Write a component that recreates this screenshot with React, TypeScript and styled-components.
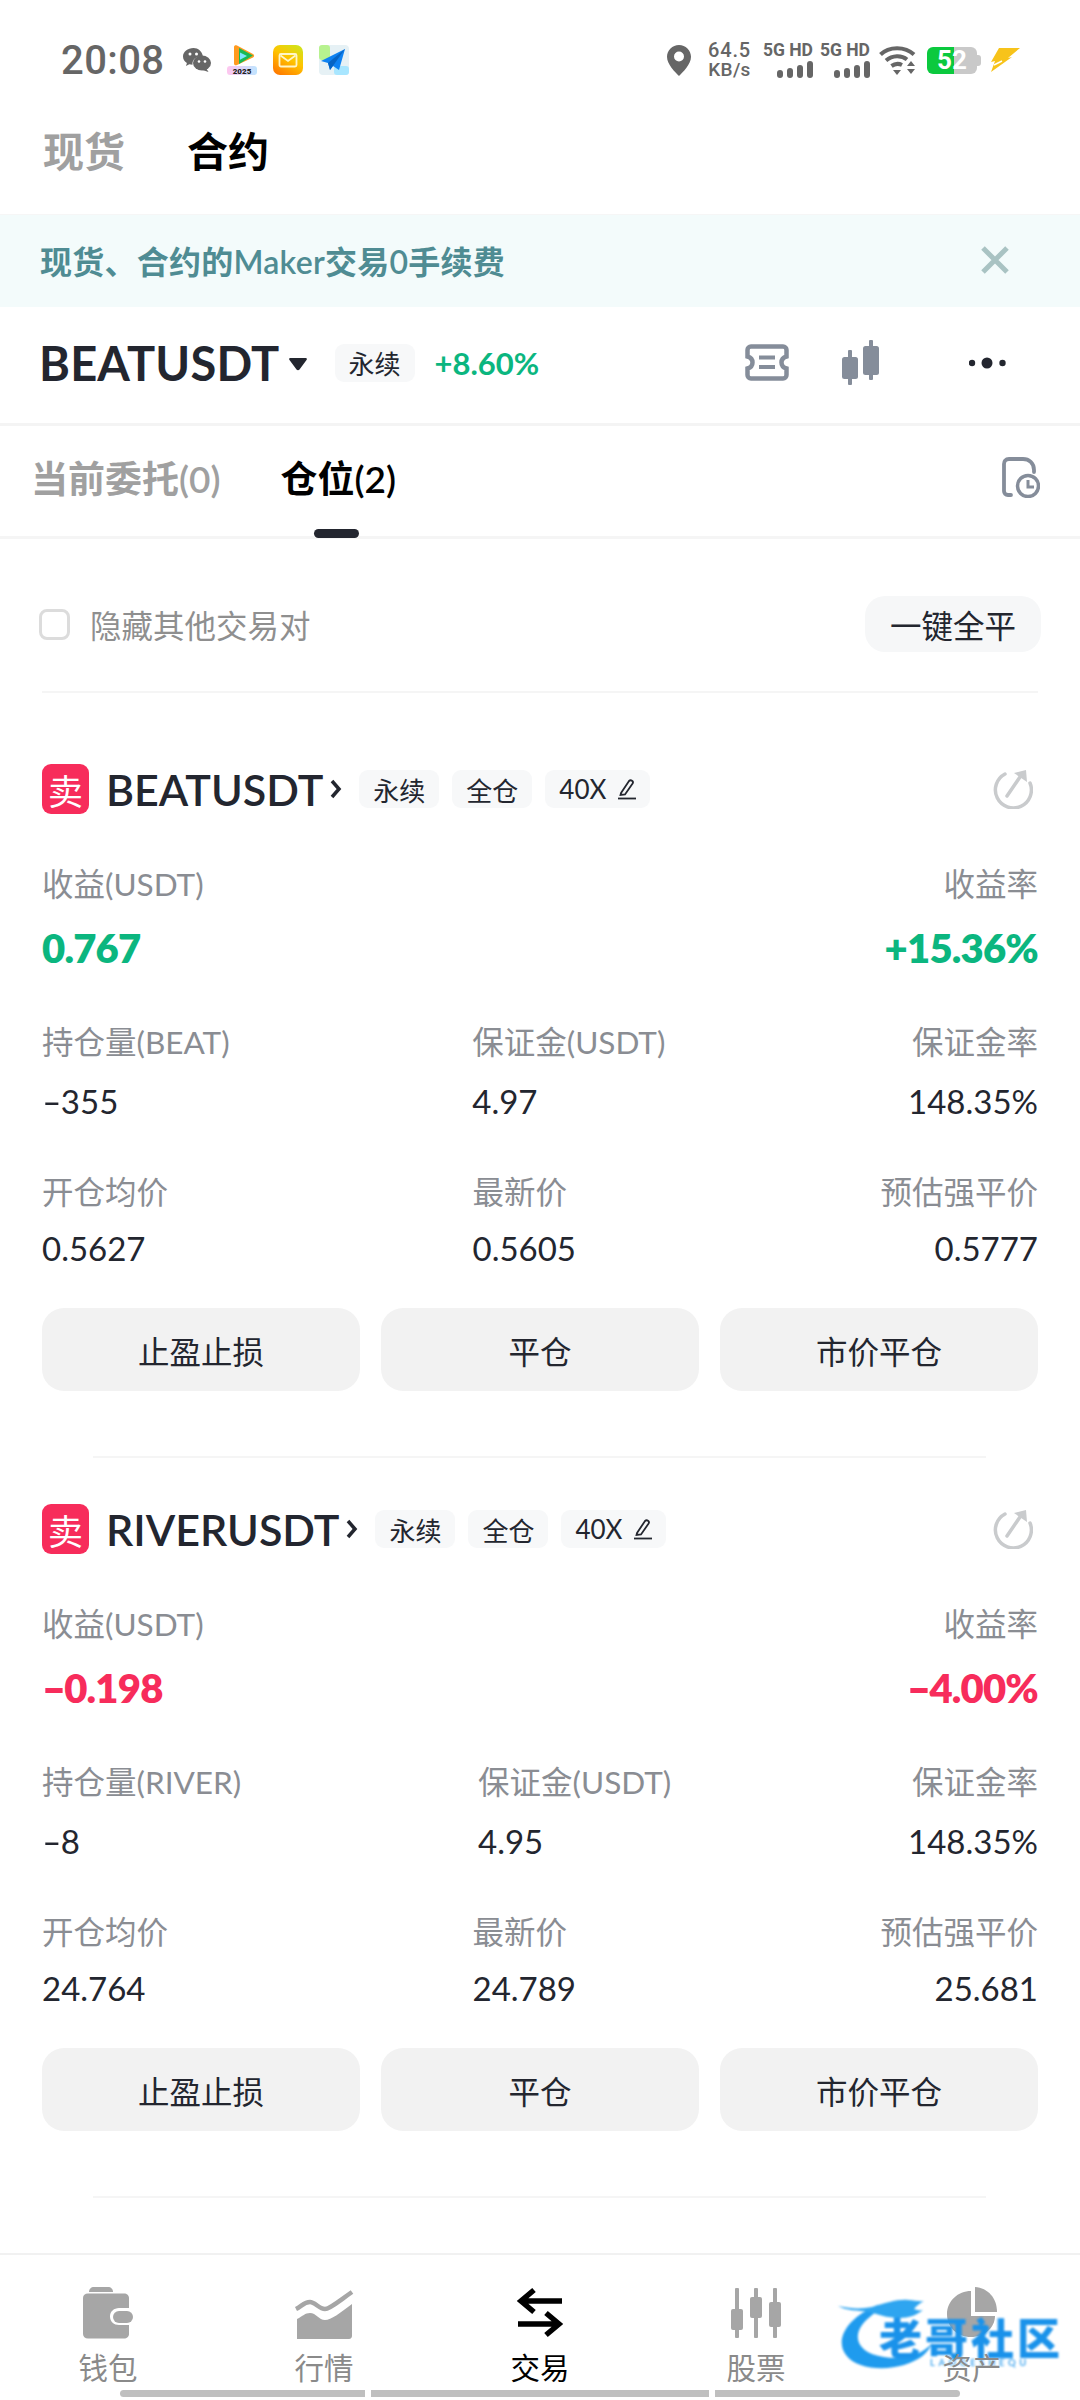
import React from "react";
import styled, { createGlobalStyle } from "styled-components";

const LATIN = `Lato, "Noto Sans CJK SC", sans-serif`;
const DARK = "#23262f";
const GREEN = "#0bb67f";
const RED = "#f72c5b";
const LABEL = "#8a8d93";
const NAV_GREY = "#a6a6a6";

const Global = createGlobalStyle`
  html, body { margin: 0; padding: 0; background: #fff; }
  * { box-sizing: border-box; }
  body { font-family: ${LATIN}; color: ${DARK}; }
`;

const Page = styled.div`
  position: relative;
  width: 1080px;
  height: 2400px;
  display: flex;
  flex-direction: column;
  overflow: hidden;
  background: #fff;
`;

/* ---- status bar ---- */
const StatusBar = styled.div`
  height: 100px;
  padding: 20px 60px 0 61px;
  display: flex;
  align-items: center;
  color: #666;
`;
const Time = styled.span`
  font: 500 40px Roboto, sans-serif;
  letter-spacing: 0.4px;
  margin-right: 19px;
`;
const NotifyIcons = styled.div`
  display: flex;
  align-items: center;
  gap: 16px;
`;
const StatusRight = styled.div`
  margin-left: auto;
  display: flex;
  align-items: center;
`;
const Speed = styled.div`
  margin: 0 12px 0 15px;
  width: 47px;
  display: flex;
  flex-direction: column;
  align-items: center;
  font: 500 20px/19px Roboto, sans-serif;
  letter-spacing: 0.8px;
  white-space: nowrap;
`;
const SpeedUnit = styled.span`
  font-size: 19px;
  letter-spacing: 0.3px;
`;
const Net = styled.div`
  width: 48px;
  margin-right: 9px;
  display: flex;
  flex-direction: column;
  align-items: flex-end;
  gap: 3px;
  font: 700 17.5px/15px Roboto, sans-serif;
  white-space: nowrap;
`;
const Battery = styled.div`
  position: relative;
  width: 50px;
  height: 27px;
  margin: 0 13px 0 11px;
  border-radius: 6px;
  background: linear-gradient(90deg, #0bc93e 54%, #c9c9c9 54%);
  color: #fff;
  font: 700 26px/27px Roboto, sans-serif;
  text-align: center;
  &::after {
    content: "";
    position: absolute;
    right: -4px;
    top: 8px;
    width: 4px;
    height: 11px;
    border-radius: 0 3px 3px 0;
    background: #c9c9c9;
  }
`;

/* ---- top tabs ---- */
const MarketTabs = styled.div`
  height: 114px;
  padding: 0 43px 17px;
  display: flex;
  align-items: center;
  gap: 62px;
`;
const MarketTab = styled.span<{ $on?: boolean }>`
  font-size: 41px;
  font-weight: 600;
  color: ${(p) => (p.$on ? "#000" : "#a0a0a0")};
`;

/* ---- banner ---- */
const Banner = styled.div`
  height: 93px;
  padding: 0 71px 2px 40px;
  display: flex;
  align-items: center;
  justify-content: space-between;
  background: #f3fbfb;
  border-top: 1px solid #f6f6f6;
  color: #4f8c93;
  font-size: 32px;
  letter-spacing: 0.25px;
  font-weight: 600;
`;

/* ---- symbol row ---- */
const SymbolRow = styled.div`
  height: 119px;
  padding: 0 74px 5px 39px;
  display: flex;
  align-items: center;
  border-bottom: 3px solid #f4f4f4;
`;
const SymbolName = styled.span`
  font-size: 47px;
  font-weight: 700;
  color: ${DARK};
  letter-spacing: 0.2px;
`;
const Caret = styled.svg`
  margin: 4px 0 0 9px;
`;
const TagBase = styled.span`
  height: 38px;
  display: inline-flex;
  align-items: center;
  gap: 12px;
  padding: 0 14px;
  border-radius: 9px;
  background: #f7f8f9;
  font-size: 26px;
  color: ${DARK};
  white-space: nowrap;
`;
const SymbolTag = styled(TagBase)`
  margin-left: 28px;
`;
const Change = styled.span`
  margin-left: 20px;
  font-size: 31px;
  font-weight: 700;
  color: ${GREEN};
`;
const SymbolIcon = styled.svg<{ $gap: number }>`
  margin-left: ${(p) => p.$gap}px;
`;
const SymbolIcons = styled.div`
  margin-left: auto;
  display: flex;
  align-items: center;
`;

/* ---- position tabs ---- */
const PosTabs = styled.div`
  position: relative;
  height: 113px;
  padding: 0 40px 8px 31px;
  display: flex;
  align-items: center;
  border-bottom: 3px solid #f5f5f5;
`;
const PosTab = styled.span<{ $on?: boolean }>`
  position: relative;
  margin-right: 60px;
  font-size: 37px;
  font-weight: 600;
  color: ${(p) => (p.$on ? "#000" : "#a0a0a0")};
`;
const Indicator = styled.span`
  position: absolute;
  left: 33px;
  bottom: -34px;
  width: 45px;
  height: 9px;
  border-radius: 5px;
  background: ${DARK};
`;
const DocIcon = styled.svg`
  margin-left: auto;
`;

/* ---- hide row ---- */
const HideRow = styled.div`
  margin: 0 42px 25px;
  height: 154px;
  padding-top: 18px;
  display: flex;
  align-items: center;
  justify-content: space-between;
  border-bottom: 2px solid #f5f5f5;
`;
const HideLabel = styled.label`
  display: flex;
  align-items: center;
  gap: 20px;
  font-size: 31.5px;
  color: #8f8f8f;
`;
const Check = styled.span`
  width: 31px;
  height: 31px;
  border: 3px solid #dcdcdc;
  border-radius: 8px;
  margin-left: -3px;
`;
const CloseAll = styled.span`
  width: 176px;
  height: 56px;
  display: flex;
  align-items: center;
  justify-content: center;
  border-radius: 20px;
  background: #f6f7f8;
  font-size: 31.5px;
  margin-right: -3px;
  color: ${DARK};
`;

/* ---- position card ---- */
const Card = styled.section`
  padding: 46px 42px 67px;
  position: relative;
  &::after {
    content: "";
    position: absolute;
    left: 93px;
    right: 94px;
    bottom: 0;
    height: 2px;
    background: #f5f5f5;
  }
`;
const TitleRow = styled.div`
  height: 50px;
  display: flex;
  align-items: center;
`;
const Badge = styled.span`
  width: 47px;
  height: 50px;
  border-radius: 9px;
  background: ${RED};
  color: #fff;
  font-size: 35px;
  display: flex;
  align-items: center;
  justify-content: center;
`;
const Name = styled.span`
  margin-left: 17px;
  font-size: 43px;
  font-weight: 600;
  color: ${DARK};
`;
const Chevron = styled.svg`
  margin: 0 7px;
`;
const TitleTags = styled.div`
  display: flex;
  gap: 13px;
  margin-left: 10px;
`;
const ShareIcon = styled.svg`
  margin-left: auto;
  margin-right: 5px;
`;
const Row = styled.div<{ $top: number }>`
  margin-top: ${(p) => p.$top}px;
  display: flex;
  justify-content: space-between;
`;
const Col = styled.div<{ $end?: boolean }>`
  display: flex;
  flex-direction: column;
  align-items: ${(p) => (p.$end ? "flex-end" : "flex-start")};
`;
const Label = styled.span`
  font-size: 31.5px;
  line-height: 40px;
  color: ${LABEL};
  white-space: nowrap;
`;
const Value = styled.span<{ $gap: number }>`
  margin-top: ${(p) => p.$gap}px;
  font-size: 33px;
  line-height: 40px;
  color: ${DARK};
`;
const BigValue = styled.span<{ $color: string }>`
  margin-top: 19px;
  font-size: 40px;
  letter-spacing: -0.8px;
  line-height: 50px;
  font-weight: 800;
  color: ${(p) => p.$color};
`;
const Sign = styled.span`
  display: inline-block;
  transform: scaleX(1.6);
  transform-origin: left center;
  margin-right: 0.2em;
`;
const Actions = styled.div`
  margin-top: 40px;
  display: grid;
  grid-template-columns: repeat(3, 318px);
  justify-content: space-between;
`;
const ActionBtn = styled.span`
  height: 83px;
  border-radius: 22px;
  background: #f2f2f2;
  display: flex;
  align-items: center;
  justify-content: center;
  font-size: 31.5px;
  color: ${DARK};
`;

/* ---- bottom nav ---- */
const Spacer = styled.div`
  flex: 1;
`;
const Nav = styled.nav`
  height: 131px;
  padding-top: 32px;
  border-top: 2px solid #f1f1f1;
  display: grid;
  grid-template-columns: repeat(5, 216px);
`;
const NavItem = styled.div<{ $on?: boolean }>`
  display: flex;
  flex-direction: column;
  align-items: center;
  color: ${(p) => (p.$on ? "#000" : "#8a8a8a")};
`;
const NavIcon = styled.svg`
  display: block;
  width: 60px;
  height: 52px;
`;
const NavLabel = styled.span`
  position: relative;
  z-index: 2;
  margin-top: 14px;
  font-size: 29.5px;
  line-height: 30px;
`;
const HomeBar = styled.div`
  margin: 6px 120px 3px;
  height: 7px;
  display: grid;
  grid-template-columns: 245px 338px 245px;
  column-gap: 6px;
`;
const HomeSeg = styled.span<{ $r?: string }>`
  background: #bfbfbf;
  border-radius: ${(p) => p.$r ?? "0"};
`;

/* ---- watermark ---- */
const Watermark = styled.div`
  position: absolute;
  z-index: 1;
  left: 838px;
  top: 2297px;
  width: 224px;
  height: 74px;
  filter: blur(0.9px);
`;
const MarkSwirl = styled.svg`
  position: absolute;
  left: 0;
  top: 0;
`;
const MarkText = styled.span`
  position: absolute;
  left: 41px;
  top: 17px;
  font: 900 43px/44px "Noto Sans CJK SC", sans-serif;
  letter-spacing: 3px;
  white-space: nowrap;
  color: #1a92ea;
`;
const MarkSub = styled.span`
  position: absolute;
  left: 92px;
  top: 60px;
  font: 700 9.5px/11px Lato, sans-serif;
  letter-spacing: 3.6px;
  white-space: nowrap;
  color: #4aa9ee;
`;

/* ---- drawings ---- */
const Pin = () => (
  <svg width="24" height="31" viewBox="0 0 24 31">
    <path fill="#666" fillRule="evenodd" d="M12 0C5.4 0 0 5.2 0 11.8 0 19.5 8.5 27.6 12 31c3.5-3.4 12-11.5 12-19.2C24 5.2 18.6 0 12 0zm0 16.5a5 5 0 1 1 0-10 5 5 0 0 1 0 10z" />
  </svg>
);
const Bars = () => (
  <svg width="36" height="17" viewBox="0 0 36 17">
    <rect x="0" y="9" width="6" height="8" rx="3" fill="#666" />
    <rect x="10" y="7" width="6" height="10" rx="3" fill="#666" />
    <rect x="20" y="4" width="6" height="13" rx="3" fill="#666" />
    <rect x="30" y="0" width="6" height="17" rx="3" fill="#666" />
  </svg>
);
const Wifi = () => (
  <svg width="37" height="30" viewBox="0 0 37 30">
    <g fill="none" stroke="#666" strokeWidth="4">
      <path d="M1.5 9.5C10 1 26 1 35 9.5" />
      <path d="M7 15.5c6.5-5.5 15.5-5.5 21-1" />
      <path d="M12.5 21c3.5-2.5 7.5-2.5 10.5-1" />
    </g>
    <path d="M14 25h8l-4 5z" fill="#666" />
    <path d="M32 16l4 5h-8zM28 24h8l-4 5z" fill="#666" />
  </svg>
);
const Bolt = () => (
  <svg width="30" height="26" viewBox="0 0 30 26">
    <path d="M9 1h21L18 11l4-1L1 25l4-11-4 1z" fill="#f7c31a" />
    <path d="M4 18l8-4" stroke="#fff" strokeWidth="1.5" />
  </svg>
);
const WeChat = () => (
  <svg width="28" height="24" viewBox="0 0 28 24">
    <path fill="#666" d="M10.5 0C4.7 0 0 3.8 0 8.5c0 2.7 1.5 5 3.9 6.6L3 18l3.3-1.7c1 .3 2.1.5 3.2.5C9 11.5 13 8 19.8 8 19 3.5 15.2 0 10.5 0z" />
    <ellipse cx="19" cy="15" rx="9" ry="7.5" fill="#666" />
    <path d="M23 20l2.5 4-6-2z" fill="#666" />
    <circle cx="7" cy="6" r="1.5" fill="#fff" />
    <circle cx="13.5" cy="6" r="1.5" fill="#fff" />
    <circle cx="16" cy="13.5" r="1.3" fill="#fff" />
    <circle cx="22" cy="13.5" r="1.3" fill="#fff" />
  </svg>
);
const TencentVideo = () => (
  <svg width="30" height="30" viewBox="0 0 30 30">
    <defs>
      <linearGradient id="tvBar" x1="0" x2="1">
        <stop offset="0" stopColor="#ffc7ef" />
        <stop offset="1" stopColor="#bfe4ff" />
      </linearGradient>
    </defs>
    <path d="M7 2c0-2 2-2 3-1.5L26 9c1.5 1 1.5 2.5 0 3.5L10 20c-1.5.8-3 0-3-1.5z" fill="#ff9a1f" />
    <path d="M12 3L26 10.5 12 19z" fill="#19b955" />
    <path d="M13 7.5l7 3.5-7 3.8z" fill="#7fe6ff" />
    <rect x="0" y="21" width="30" height="9" rx="3" fill="url(#tvBar)" />
    <text x="15" y="28.5" textAnchor="middle" fontSize="8" fontWeight="900" fill="#222" fontFamily="Roboto">2025</text>
  </svg>
);
const MailApp = () => (
  <svg width="30" height="30" viewBox="0 0 30 30">
    <defs>
      <linearGradient id="mailBg" x1="0.8" y1="0" x2="0.2" y2="1">
        <stop offset="0" stopColor="#d2e21a" />
        <stop offset="0.45" stopColor="#ffc400" />
        <stop offset="1" stopColor="#ff7a00" />
      </linearGradient>
    </defs>
    <rect width="30" height="30" rx="7" fill="url(#mailBg)" />
    <rect x="6.5" y="9" width="17" height="12.5" rx="1.5" fill="none" stroke="#fff6c8" strokeWidth="1.8" />
    <path d="M7.5 10.5L15 16l7.5-5.5" fill="none" stroke="#fff6c8" strokeWidth="1.8" />
  </svg>
);
const Feishu = () => (
  <svg width="30" height="30" viewBox="0 0 30 30">
    <rect width="30" height="30" rx="4" fill="#e6f1f5" />
    <rect width="11" height="15" rx="3" fill="#b7f28f" />
    <rect x="15" y="21" width="15" height="9" rx="3" fill="#a8e6ff" />
    <path d="M26 4L2 16l7 2 2 7 3-4 6 4z" fill="#0e82f2" />
    <path d="M26 4L9 18l2 7z" fill="#0664c4" />
  </svg>
);
const Close = () => (
  <svg width="28" height="28" viewBox="0 0 28 28">
    <path d="M2 2l24 24M26 2L2 26" stroke="#a9c3c3" strokeWidth="5" />
  </svg>
);
const Pencil = () => (
  <svg width="18" height="22" viewBox="0 0 18 22">
    <path d="M3 15L11 3c1-1 2-1 3-.3 1 .7 1.3 1.7.6 2.8L7 16.5l-4.5.5z" fill="none" stroke={DARK} strokeWidth="1.8" />
    <path d="M0 20.5h18" stroke={DARK} strokeWidth="1.8" />
  </svg>
);
const Share = () => (
  <ShareIcon width="40" height="40" viewBox="0 0 40 40">
    <path d="M12 5A18 18 0 1 0 37 14" fill="none" stroke="#c9cbcd" strokeWidth="3.5" strokeLinecap="round" />
    <path d="M14 27L29 5" stroke="#c9cbcd" strokeWidth="3.5" strokeLinecap="round" />
    <path d="M21 4l12-3 1 12z" fill="#c9cbcd" />
  </ShareIcon>
);

const Signed = ({ text }: { text: string }) =>
  text.startsWith("-") ? (
    <>
      <Sign>-</Sign>
      {text.slice(1)}
    </>
  ) : (
    <>{text}</>
  );

type Cell = { label: string; value: string };
type Pos = {
  name: string;
  pnl: string;
  rate: string;
  color: string;
  rows: [Cell[], Cell[]];
};

const positions: Pos[] = [
  {
    name: "BEATUSDT",
    pnl: "0.767",
    rate: "+15.36%",
    color: GREEN,
    rows: [
      [
        { label: "持仓量(BEAT)", value: "-355" },
        { label: "保证金(USDT)", value: "4.97" },
        { label: "保证金率", value: "148.35%" },
      ],
      [
        { label: "开仓均价", value: "0.5627" },
        { label: "最新价", value: "0.5605" },
        { label: "预估强平价", value: "0.5777" },
      ],
    ],
  },
  {
    name: "RIVERUSDT",
    pnl: "-0.198",
    rate: "-4.00%",
    color: RED,
    rows: [
      [
        { label: "持仓量(RIVER)", value: "-8" },
        { label: "保证金(USDT)", value: "4.95" },
        { label: "保证金率", value: "148.35%" },
      ],
      [
        { label: "开仓均价", value: "24.764" },
        { label: "最新价", value: "24.789" },
        { label: "预估强平价", value: "25.681" },
      ],
    ],
  },
];

const PositionCard = ({ p }: { p: Pos }) => (
  <Card>
    <TitleRow>
      <Badge>卖</Badge>
      <Name>{p.name}</Name>
      <Chevron width="12" height="22" viewBox="0 0 12 22">
        <path d="M2 3l7 8-7 8" fill="none" stroke={DARK} strokeWidth="3.5" />
      </Chevron>
      <TitleTags>
        <TagBase>永续</TagBase>
        <TagBase>全仓</TagBase>
        <TagBase>
          40X
          <Pencil />
        </TagBase>
      </TitleTags>
      <Share />
    </TitleRow>
    <Row $top={50}>
      <Col>
        <Label>收益(USDT)</Label>
        <BigValue $color={p.color}>
          <Signed text={p.pnl} />
        </BigValue>
      </Col>
      <Col $end>
        <Label>收益率</Label>
        <BigValue $color={p.color}>
          <Signed text={p.rate} />
        </BigValue>
      </Col>
    </Row>
    {p.rows.map((cells, r) => (
      <Row key={r} $top={r === 0 ? 49 : 51}>
        {cells.map((c, i) => (
          <Col key={c.label} $end={i === 2}>
            <Label>{c.label}</Label>
            <Value $gap={r === 0 ? 19 : 16}>
              <Signed text={c.value} />
            </Value>
          </Col>
        ))}
      </Row>
    ))}
    <Actions>
      <ActionBtn>止盈止损</ActionBtn>
      <ActionBtn>平仓</ActionBtn>
      <ActionBtn>市价平仓</ActionBtn>
    </Actions>
  </Card>
);

export default function App() {
  return (
    <Page>
      <Global />
      <StatusBar>
        <Time>20:08</Time>
        <NotifyIcons>
          <WeChat />
          <TencentVideo />
          <MailApp />
          <Feishu />
        </NotifyIcons>
        <StatusRight>
          <Pin />
          <Speed>
            64.5
            <SpeedUnit>KB/s</SpeedUnit>
          </Speed>
          <Net>
            5G HD
            <Bars />
          </Net>
          <Net>
            5G HD
            <Bars />
          </Net>
          <Wifi />
          <Battery>52</Battery>
          <Bolt />
        </StatusRight>
      </StatusBar>

      <MarketTabs>
        <MarketTab>现货</MarketTab>
        <MarketTab $on>合约</MarketTab>
      </MarketTabs>

      <Banner>
        <span>现货、合约的Maker交易0手续费</span>
        <Close />
      </Banner>

      <SymbolRow>
        <SymbolName>BEATUSDT</SymbolName>
        <Caret width="18" height="13" viewBox="0 0 18 13">
          <path d="M1.5 0h15c1.3 0 1.8 1 1 2L10.500 11.500c-.8 1-2.2 1-3 0L.5 2c-.8-1-.3-2 1-2z" fill={DARK} />
        </Caret>
        <SymbolTag>永续</SymbolTag>
        <Change>+8.60%</Change>
        <SymbolIcons>
          <SymbolIcon $gap={0} width="44" height="37" viewBox="0 0 44 37">
            <path d="M6 2.5h32c2 0 3.5 1.5 3.5 3.5v6.5c-3.5 1-5 3.5-5 6s1.5 5 5 6V31c0 2-1.5 3.5-3.5 3.5H6c-2 0-3.5-1.5-3.5-3.5v-6.5c3.5-1 5-3.500 5-6s-1.500-5-5-6V6c0-2 1.500-3.500 3.500-3.500z" fill="none" stroke="#858d9a" strokeWidth="4.5" />
            <path d="M14 13.5h16M14 23h16" stroke="#858d9a" strokeWidth="4" />
          </SymbolIcon>
          <SymbolIcon $gap={53} width="38" height="45" viewBox="0 0 38 45">
            <g fill="#858d9a">
              <rect x="0" y="17" width="16" height="22" rx="2.5" />
              <rect x="6" y="10" width="4" height="35" rx="1" />
              <rect x="21" y="6" width="16" height="29" rx="2.5" />
              <rect x="27" y="0" width="4" height="40" rx="1" />
            </g>
          </SymbolIcon>
          <SymbolIcon $gap={89} width="37" height="14" viewBox="0 0 37 14">
            <circle cx="3" cy="7" r="3.2" fill={DARK} />
            <circle cx="18" cy="7" r="5.5" fill={DARK} />
            <circle cx="33.5" cy="7" r="3.2" fill={DARK} />
          </SymbolIcon>
        </SymbolIcons>
      </SymbolRow>

      <PosTabs>
        <PosTab>当前委托(0)</PosTab>
        <PosTab $on>
          仓位(2)
          <Indicator />
        </PosTab>
        <DocIcon width="38" height="41" viewBox="0 0 38 41">
          <path d="M9 38H6c-2.5 0-4-1.5-4-4V7c0-2.5 1.5-5 5-5h14c6 0 11 4 11 11v2" fill="none" stroke="#858d9a" strokeWidth="3.8" strokeLinecap="round" />
          <circle cx="26" cy="29" r="10.5" fill="#fff" stroke="#858d9a" strokeWidth="3.5" />
          <path d="M26 23v7h6" fill="none" stroke="#858d9a" strokeWidth="3" />
        </DocIcon>
      </PosTabs>

      <HideRow>
        <HideLabel>
          <Check />
          隐藏其他交易对
        </HideLabel>
        <CloseAll>一键全平</CloseAll>
      </HideRow>

      {positions.map((p) => (
        <PositionCard key={p.name} p={p} />
      ))}

      <Spacer />

      <Nav>
        <NavItem>
          <NavIcon viewBox="0 0 60 52">
            <path d="M11 5c0-3 2-5 5-5h14c3 0 5 2 5 5H11z" fill={NAV_GREY} />
            <path d="M9 12c0-3 2-4.5 5-4.5h36c3 0 5 2 5 4.5v10H45c-5 0-9 3.5-9 8.5S40 39 45 39h10v9c0 2.5-2 4.5-5 4.5H14c-3 0-5-2-5-4.500z" fill={NAV_GREY} transform="translate(-4 -1)" />
            <rect x="35" y="24" width="20" height="12" rx="6" fill={NAV_GREY} />
          </NavIcon>
          <NavLabel>钱包</NavLabel>
        </NavItem>
        <NavItem>
          <NavIcon viewBox="0 0 60 52">
            <path d="M2 22c6-3 8-7 14-7 5 0 9 7 15 7 5 0 14-8 27-17" fill="none" stroke={NAV_GREY} strokeWidth="4.5" />
            <path d="M3 32c6-3 8-6 13-6 6 0 9 7 15 7 6 0 15-7 27-16v32c0 1.5-1 3-3 3H3z" fill={NAV_GREY} />
          </NavIcon>
          <NavLabel>行情</NavLabel>
        </NavItem>
        <NavItem $on>
          <NavIcon viewBox="0 0 60 52">
            <path d="M52 14H12M24 3L11 14l13 11" fill="none" stroke="#000" strokeWidth="5.5" />
            <path d="M8 37h40M36 26l13 11-13 11" fill="none" stroke="#000" strokeWidth="5.5" />
          </NavIcon>
          <NavLabel>交易</NavLabel>
        </NavItem>
        <NavItem>
          <NavIcon viewBox="0 0 60 52">
            <g fill={NAV_GREY}>
              <rect x="5" y="22" width="12" height="21" rx="2" />
              <rect x="9" y="1" width="4" height="50" rx="1" />
              <rect x="24" y="10" width="12" height="21" rx="2" />
              <rect x="28" y="1" width="4" height="50" rx="1" />
              <rect x="43" y="15" width="12" height="25" rx="2" />
              <rect x="47" y="1" width="4" height="50" rx="1" />
            </g>
          </NavIcon>
          <NavLabel>股票</NavLabel>
        </NavItem>
        <NavItem>
          <NavIcon viewBox="0 0 60 52">
            <path d="M29 5v25h24c0 12-11 21-24 21C15 51 5 41 5 28 5 15 16 5 29 5z" fill={NAV_GREY} transform="translate(0 -1)" />
            <path d="M33 0c13 1 22 11 22 25H33z" fill={NAV_GREY} />
          </NavIcon>
          <NavLabel>资产</NavLabel>
        </NavItem>
      </Nav>
      <HomeBar>
        <HomeSeg $r="4px 0 0 4px" />
        <HomeSeg />
        <HomeSeg $r="0 4px 4px 0" />
      </HomeBar>

      <Watermark>
        <MarkSwirl width="224" height="74" viewBox="0 0 224 74">
          <path d="M40 8C10 20-4 42 8 58c10 14 38 16 58 10 16-5 24-12 28-22C84 58 66 63 46 60 22 57 14 42 24 28 30 20 40 14 46 8z" fill="#1f9bee" />
          <path d="M0 9c14 3 24 3 34 1 14-4 26-8 36-7 6 0 12 2 16 1-5 3-8 5-10 8 3 1 6 2 9 1-6 5-14 8-24 8-12 0-22-4-30-6C20 13 8 14 0 9z" fill="#2ea5f0" />
        </MarkSwirl>
        <MarkText>老哥社区</MarkText>
        <MarkSub>LAOGESHEQU</MarkSub>
      </Watermark>
    </Page>
  );
}
